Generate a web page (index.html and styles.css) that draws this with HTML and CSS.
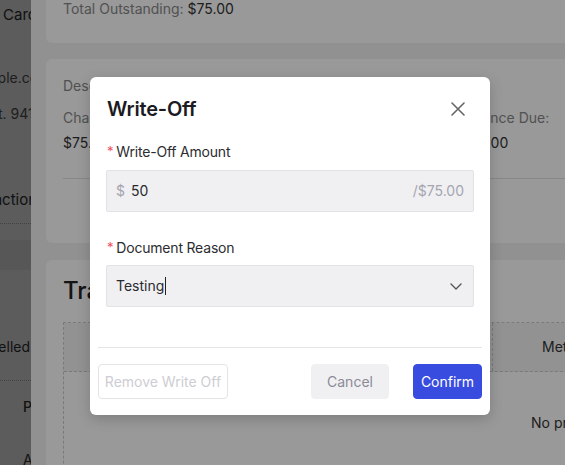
FILE: index.html
```html
<!DOCTYPE html>
<html lang="en">
<head>
<meta charset="utf-8">
<title>Write-Off</title>
<link rel="stylesheet" href="styles.css">
</head>
<body>
<div class="page">
  <div class="pl pl-1">Card</div>
  <div class="pl pl-2">example.com</div>
  <div class="pl pl-3">St. 94117</div>
  <div class="pl pl-4">Transaction</div>
  <div class="pl-dots pl-d1"></div>
  <div class="pl-band"></div>
  <div class="pl pl-5">Cancelled</div>
  <div class="pl-dots pl-d2"></div>
  <div class="pl pl-6">P</div>
  <div class="pl pl-7">A</div>
</div>
<div class="mask"></div>

<aside class="drawer">
  <div class="drawer-inner">
    <section class="card card-total">
      <span class="muted">Total Outstanding:</span> <span class="value">$75.00</span>
    </section>
    <section class="card card-detail">
      <div class="muted">Description</div>
      <div class="detail-row">
        <div class="col">
          <div class="muted">Charge Amount:</div>
          <div class="value">$75.00</div>
        </div>
        <div class="col">
          <div class="muted">Balance Due:</div>
          <div class="value">$75.00</div>
        </div>
      </div>
      <div class="detail-line"></div>
    </section>
    <section class="card card-trans">
      <h2 class="trans-title">Transactions</h2>
      <div class="table">
        <div class="thead">
          <div class="th th-main"></div>
          <div class="th th-method">Method</div>
        </div>
        <div class="tbody">No previous transactions</div>
      </div>
    </section>
  </div>
</aside>
<div class="mask"></div>

<div class="modal" role="dialog">
  <div class="modal-header">
    <h1 class="modal-title">Write-Off</h1>
    <button class="close" aria-label="Close">
      <svg width="14" height="14" viewBox="0 0 14 14"><path d="M1 1 L13 13 M13 1 L1 13" stroke="#666" stroke-width="1.6" stroke-linecap="round" fill="none"/></svg>
    </button>
  </div>
  <div class="field">
    <div class="label"><span class="req">*</span>Write-Off Amount</div>
    <div class="input">
      <span class="prefix">$</span>
      <span class="val">50</span>
      <span class="suffix">/$75.00</span>
    </div>
  </div>
  <div class="field field-last">
    <div class="label"><span class="req">*</span>Document Reason</div>
    <div class="input select">
      <span class="val">Testing<span class="caret"></span></span>
      <svg class="chev" width="12" height="7" viewBox="0 0 12 7"><path d="M1 1 L6 6 L11 1" stroke="#555" stroke-width="1.4" fill="none" stroke-linecap="round" stroke-linejoin="round"/></svg>
    </div>
  </div>
  <div class="modal-footer">
    <button class="btn btn-remove">Remove Write Off</button>
    <div class="spacer"></div>
    <button class="btn btn-cancel">Cancel</button>
    <button class="btn btn-confirm">Confirm</button>
  </div>
</div>
</body>
</html>
```

FILE: styles.css
```css
* { box-sizing: border-box; }

html, body {
  margin: 0;
  padding: 0;
}

body {
  width: 565px;
  height: 465px;
  overflow: hidden;
  position: relative;
  font-family: Inter, "Liberation Sans", sans-serif;
  font-size: 14px;
  line-height: 22px;
  color: #222;
  background: #fff;
}

/* underlying page */
.page {
  position: absolute;
  inset: 0;
  background: #fff;
  overflow: hidden;
}
.pl {
  height: 22px;
  white-space: nowrap;
  color: #333;
}
.pl-1 { margin-top: 4px; padding-left: 3px; font-size: 15px; }
.pl-2 { margin-top: 41px; margin-left: -38px; color: #555; }
.pl-3 { margin-top: 14px; margin-left: -11px; color: #555; }
.pl-4 { margin-top: 64px; margin-left: -46px; font-size: 15px; }
.pl-dots { height: 1px; border-top: 1px dotted #bbb; }
.pl-d1 { margin-top: 12px; }
.pl-band { margin-top: 16px; height: 30px; background: #f3f3f3; }
.pl-5 { margin-top: 66px; margin-left: -36px; }
.pl-d2 { margin-top: 22px; }
.pl-6 { margin-top: 15px; padding-left: 23px; font-weight: 500; }
.pl-7 { margin-top: 31px; padding-left: 23px; }

.mask {
  position: absolute;
  inset: 0;
  background: rgba(0, 0, 0, 0.4);
}

/* drawer */
.drawer {
  position: absolute;
  top: 0;
  left: 31px;
  width: 640px;
  height: 465px;
  background: #f2f2f3;
  overflow: hidden;
}
.drawer-inner {
  margin-top: -20px;
  padding: 0 15px;
  display: flex;
  flex-direction: column;
  gap: 16px;
}
.card {
  background: #fff;
  border-radius: 6px;
  padding: 0 17px;
}
.muted { color: #888; }
.value { color: #333; }

.card-total {
  height: 63px;
  padding-top: 18px;
}

.card-detail {
  height: 184px;
  padding-top: 16px;
}
.detail-row {
  display: grid;
  grid-template-columns: 399px auto;
  margin-top: 10px;
}
.detail-row .value { margin-top: 3px; }
.detail-line {
  margin-top: 24px;
  height: 1px;
  background: #e2e2e2;
}

.card-trans {
  margin-top: 1px;
  height: 300px;
  padding-top: 15px;
}
.trans-title {
  margin: 0;
  font-size: 24px;
  line-height: 32px;
  font-weight: 500;
  color: #222;
}
.table {
  margin-top: 15px;
  border: 1px dashed #ccc;
}
.thead {
  display: flex;
  height: 49px;
  background: #f4f4f4;
  border-bottom: 1px dashed #ccc;
}
.th {
  line-height: 48px;
  color: #333;
}
.th-main {
  width: 429px;
  border-right: 1px dashed #ccc;
}
.th-method { padding-left: 49px; }
.tbody {
  height: 140px;
  padding: 40px 0 0 467px;
  white-space: nowrap;
  color: #333;
}

/* modal */
.modal {
  position: absolute;
  left: 90px;
  top: 77px;
  width: 400px;
  height: 338px;
  background: #fff;
  border-radius: 6px;
  box-shadow: 0 4px 14px rgba(0, 0, 0, 0.18);
  padding: 18px 16px 16px;
}
.modal-header {
  display: flex;
  align-items: center;
  justify-content: space-between;
  height: 28px;
}
.modal-title {
  margin: 0;
  font-size: 20px;
  line-height: 28px;
  font-weight: 600;
  letter-spacing: -0.2px;
  color: #1b1b1f;
  padding-left: 1px;
}
.close {
  border: 0;
  background: none;
  padding: 0;
  width: 14px;
  height: 14px;
  margin-right: 9px;
  display: flex;
}

.field { margin-top: 18px; }
.field-last { margin-top: 25px; }
.label {
  color: #2c2c30;
  margin-bottom: 7px;
  display: flex;
  align-items: baseline;
  letter-spacing: -0.2px;
}
.field-last .label { margin-bottom: 6px; }
.req {
  color: #f0525f;
  margin: 0 3px 0 1px;
  font-size: 13px;
  position: relative;
  top: -1px;
}
.input {
  height: 42px;
  background: #f0f0f2;
  border: 1px solid #e3e3e7;
  border-radius: 2px;
  display: flex;
  align-items: center;
  padding: 0 9px;
}
.prefix {
  color: #a3a3ad;
  margin-right: 6px;
}
.val { color: #2a2a2e; }
.suffix {
  margin-left: auto;
  color: #a5a5b0;
}
.select { justify-content: space-between; padding-right: 11px; }
.caret {
  display: inline-block;
  width: 1px;
  height: 18px;
  background: #222;
  vertical-align: -4px;
  margin-left: 1px;
}

.modal-footer {
  margin: 40px -8px 0;
  border-top: 1px solid #e4e4e4;
  padding-top: 16px;
  display: flex;
  align-items: center;
}
.spacer { flex: 1; }
.btn {
  font-family: inherit;
  font-size: 14px;
  height: 35px;
  border-radius: 4px;
  padding: 0;
  cursor: pointer;
}
.btn-remove {
  width: 130px;
  background: #fff;
  border: 1px solid #e4e4e6;
  color: #cdcdd3;
}
.btn-cancel {
  width: 78px;
  background: #f0f0f2;
  border: 1px solid #f0f0f2;
  color: #8b8b97;
  margin-right: 24px;
}
.btn-confirm {
  width: 69px;
  background: #384ce0;
  border: 1px solid #384ce0;
  color: #fff;
}
```
